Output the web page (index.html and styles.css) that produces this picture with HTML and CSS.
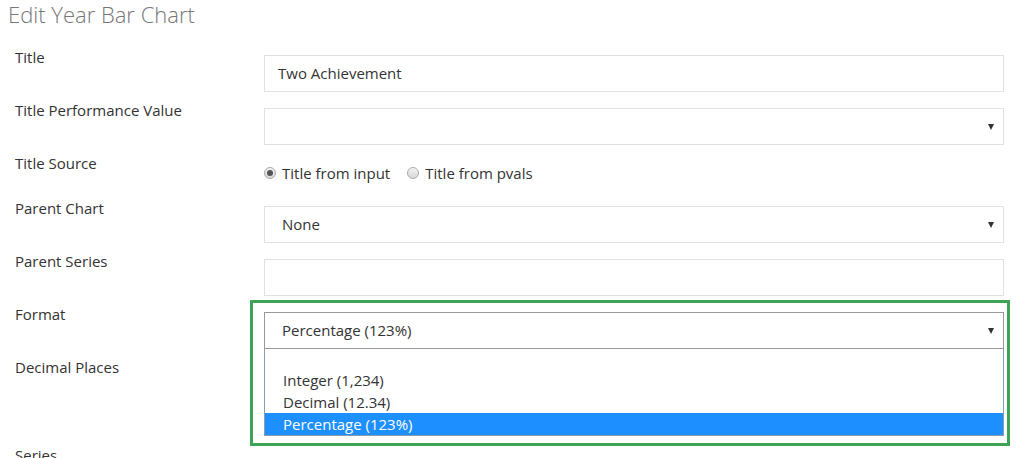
FILE: index.html
```html
<!DOCTYPE html>
<html>
<head>
    <title>Edit Year Bar Chart</title>
    <link rel="stylesheet" href="styles.css">
</head>
<body>
    <h1 class="page-title">Edit Year Bar Chart</h1>
    <form class="chart-form">
        <div class="form-row">
            <label>Title</label>
            <div class="control">
                <div class="field">Two Achievement</div>
            </div>
        </div>
        <div class="form-row">
            <label>Title Performance Value</label>
            <div class="control">
                <div class="field select"></div>
            </div>
        </div>
        <div class="form-row">
            <label>Title Source</label>
            <div class="control radios">
                <span class="radio checked"></span><span class="radio-text">Title from input</span>
                <span class="radio"></span><span class="radio-text">Title from pvals</span>
            </div>
        </div>
        <div class="form-row">
            <label>Parent Chart</label>
            <div class="control">
                <div class="field select pick">None</div>
            </div>
        </div>
        <div class="form-row">
            <label>Parent Series</label>
            <div class="control">
                <div class="field"></div>
            </div>
        </div>
        <div class="form-row">
            <label>Format</label>
            <div class="control open">
                <div class="highlight"></div>
                <div class="field select pick focused">Percentage (123%)</div>
                <ul class="options">
                    <li></li>
                    <li>Integer (1,234)</li>
                    <li>Decimal (12.34)</li>
                    <li class="active">Percentage (123%)</li>
                </ul>
            </div>
        </div>
        <div class="form-row">
            <label>Decimal Places</label>
            <div class="control tall">
                <div class="field"></div>
            </div>
        </div>
        <div class="form-row">
            <label>Series</label>
            <div class="control series">
                <div class="field"></div>
            </div>
        </div>
    </form>
</body>
</html>
```

FILE: styles.css
```css
body {
    margin: 0;
    font-family: "Open Sans", Arial, sans-serif;
    font-size: 15px;
    color: #333;
    background: #fff;
    overflow: hidden;
}
.page-title {
    margin: 0;
    padding: 0 0 0 8px;
    height: 47px;
    font-size: 22px;
    font-weight: 300;
    line-height: 28px;
    color: #777;
}
.chart-form {
    padding: 0 16px 0 15px;
}
.form-row {
    display: grid;
    grid-template-columns: 249px 1fr;
    margin-bottom: 8px;
}
.form-row label {
    line-height: 20px;
}
.control {
    position: relative;
    padding-top: 8px;
}
.control.tall {
    height: 80px;
    padding-top: 0;
}
.control.tall .field {
    margin-top: 8px;
}
.control.series {
    padding-top: 16px;
}
.field {
    height: 35px;
    border: 1px solid #e1e1e1;
    padding: 0 13px;
    line-height: 35px;
    position: relative;
}
.field.pick {
    padding-left: 17px;
}
.field.select::after {
    content: "";
    position: absolute;
    right: 9px;
    top: 15px;
    border-left: 3px solid transparent;
    border-right: 3px solid transparent;
    border-top: 6px solid #333;
}
.field.focused {
    border-color: #999;
}
.radios {
    padding-top: 10px;
    height: 27px;
    display: flex;
    align-items: flex-start;
    line-height: 20px;
}
.radio {
    width: 10px;
    height: 10px;
    margin: 4px 6px 0 0;
    border: 1px solid #aaa;
    border-radius: 50%;
    background: linear-gradient(#f4f4f4, #d6d6d6);
    position: relative;
}
.radio.checked::after {
    content: "";
    position: absolute;
    left: 2px;
    top: 2px;
    width: 6px;
    height: 6px;
    border-radius: 50%;
    background: #555;
}
.radio-text {
    margin-right: 17px;
}
.open {
    z-index: 2;
}
.highlight {
    position: absolute;
    left: -14px;
    top: -4px;
    width: 754px;
    height: 140px;
    border: 3px solid #3fa356;
    pointer-events: none;
}
.options {
    position: absolute;
    left: 0;
    right: 0;
    top: 45px;
    margin: 0;
    padding: 0;
    list-style: none;
    background: #fff;
    border: 1px solid #8c9cb0;
    border-top: none;
}
.options li {
    height: 22px;
    line-height: 22px;
    padding-left: 18px;
}
.options li:first-child {
    height: 20px;
}
.options li.active {
    background: #1e8fff;
    color: #fff;
}
```
